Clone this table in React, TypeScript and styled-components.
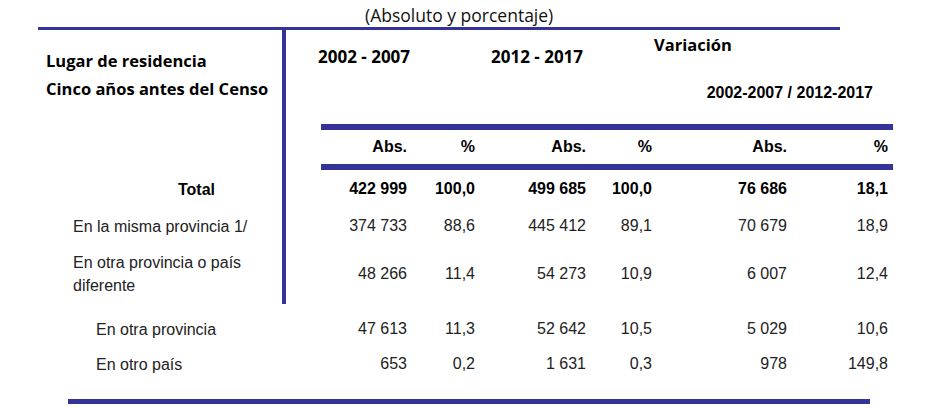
import React from "react";
import styled, { createGlobalStyle } from "styled-components";

const GlobalStyle = createGlobalStyle`
  body {
    margin: 0;
    background: #ffffff;
    font-family: "Liberation Sans", Arial, sans-serif;
    color: #111111;
  }
`;

const navy = "#333399";
const arial = `"Liberation Sans", Arial, sans-serif`;
const calibri = `"Open Sans", Lato, sans-serif`;

const Page = styled.div`
  width: 930px;
  height: 408px;
  overflow: hidden;
`;

const Caption = styled.div`
  margin-left: 365px;
  height: 27px;
  line-height: 30px;
  font-family: ${calibri};
  font-size: 17.5px;
  color: #111;
`;

const TopRule = styled.div`
  margin-left: 38px;
  width: 802px;
  height: 3px;
  background: ${navy};
`;

const Table = styled.div`
  margin-left: 38px;
  display: grid;
  grid-template-columns: 244px 4px 35px 86px 68px 111px 66px 135px 101px 5px;
  grid-template-rows: 94px 6px 34px 6px 38px 36px 60px 43px 34px;
`;

const VRule = styled.div`
  grid-column: 2;
  grid-row: 1 / 8;
  background: ${navy};
`;

const HRule = styled.div<{ $row: number }>`
  grid-column: 4 / 11;
  grid-row: ${(p) => p.$row};
  background: ${navy};
`;

const TitleBlock = styled.div`
  grid-column: 1;
  grid-row: 1;
  padding: 17px 0 0 8px;
  font-family: ${calibri};
  font-weight: 700;
  font-size: 16.5px;
  line-height: 28px;
  color: #000;
`;

const Period = styled.div<{ $col: string; $pad: number; $top: number }>`
  grid-column: ${(p) => p.$col};
  grid-row: 1;
  padding: ${(p) => p.$top}px 0 0 ${(p) => p.$pad}px;
  font-family: ${calibri};
  font-weight: 700;
  font-size: 17px;
  line-height: 24px;
  color: #000;
`;

const Variation = styled.div`
  grid-column: 8 / 10;
  grid-row: 1;
  display: flex;
  flex-direction: column;
  padding-top: 3px;
`;

const VariationTitle = styled.span`
  padding-left: 2px;
  font-family: ${calibri};
  font-weight: 700;
  font-size: 16.5px;
  line-height: 24px;
  color: #000;
`;

const VariationRange = styled.span`
  margin-top: 26px;
  padding-right: 15px;
  text-align: right;
  font-family: ${arial};
  font-weight: 700;
  font-size: 16px;
  line-height: 20px;
  color: #000;
`;

const Cell = styled.div<{ $row: number; $col: number; $bold?: boolean; $pad?: number }>`
  grid-column: ${(p) => p.$col};
  grid-row: ${(p) => p.$row};
  align-self: center;
  padding-top: ${(p) => p.$pad || 0}px;
  text-align: right;
  font-family: ${arial};
  font-size: 16px;
  line-height: 20px;
  font-weight: ${(p) => (p.$bold ? 700 : 400)};
  color: ${(p) => (p.$bold ? "#000" : "#222")};
`;

const Label = styled.div<{ $row: number; $indent: number; $bold?: boolean; $pad?: number }>`
  grid-column: 1;
  grid-row: ${(p) => p.$row};
  align-self: center;
  padding-left: ${(p) => p.$indent}px;
  padding-top: ${(p) => p.$pad || 0}px;
  font-family: ${arial};
  font-size: 16px;
  line-height: 23px;
  font-weight: ${(p) => (p.$bold ? 700 : 400)};
  color: ${(p) => (p.$bold ? "#000" : "#222")};
`;

const BottomRule = styled.div`
  margin: 18px 0 0 68px;
  width: 802px;
  height: 5px;
  background: ${navy};
`;

const subHeads = ["Abs.", "%", "Abs.", "%", "Abs.", "%"];

const rows = [
  { label: "Total", indent: 140, bold: true, values: ["422 999", "100,0", "499 685", "100,0", "76 686", "18,1"] },
  { label: "En la misma provincia 1/", indent: 35, values: ["374 733", "88,6", "445 412", "89,1", "70 679", "18,9"] },
  { label: "En otra provincia o país diferente", indent: 35, values: ["48 266", "11,4", "54 273", "10,9", "6 007", "12,4"] },
  { label: "En otra provincia", indent: 58, pad: 7, values: ["47 613", "11,3", "52 642", "10,5", "5 029", "10,6"] },
  { label: "En otro país", indent: 58, values: ["653", "0,2", "1 631", "0,3", "978", "149,8"] },
];

export default function App() {
  return (
    <Page>
      <GlobalStyle />
      <Caption>(Absoluto y porcentaje)</Caption>
      <TopRule />
      <Table>
        <VRule />
        <TitleBlock>
          Lugar de residencia
          <br />
          Cinco años antes del Censo
        </TitleBlock>
        <Period $col="3 / 6" $pad={32} $top={15}>2002 - 2007</Period>
        <Period $col="6 / 8" $pad={16} $top={15}>2012 - 2017</Period>
        <Variation>
          <VariationTitle>Variación</VariationTitle>
          <VariationRange>2002-2007 / 2012-2017</VariationRange>
        </Variation>
        <HRule $row={2} />
        {subHeads.map((h, i) => (
          <Cell key={"h" + i} $row={3} $col={4 + i} $bold>
            {h}
          </Cell>
        ))}
        <HRule $row={4} />
        {rows.map((r, ri) => (
          <React.Fragment key={r.label}>
            <Label $row={5 + ri} $indent={r.indent} $bold={r.bold} $pad={r.pad}>
              {r.label}
            </Label>
            {r.values.map((v, ci) => (
              <Cell key={ci} $row={5 + ri} $col={4 + ci} $bold={r.bold} $pad={r.pad}>
                {v}
              </Cell>
            ))}
          </React.Fragment>
        ))}
      </Table>
      <BottomRule />
    </Page>
  );
}
